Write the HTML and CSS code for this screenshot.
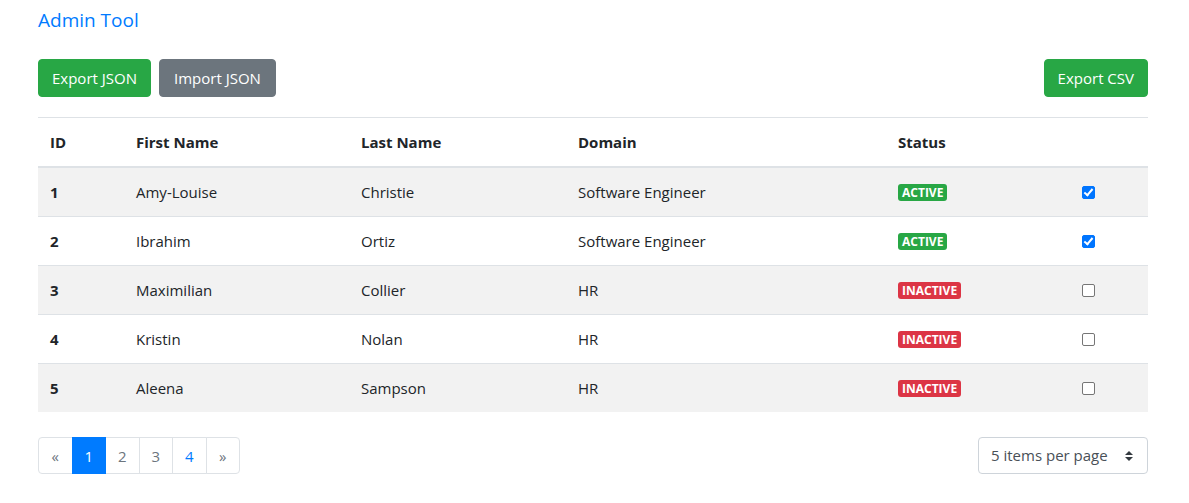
FILE: index.html
```html
<!DOCTYPE html>
<html>
<head>
<meta charset="utf-8">
<link rel="stylesheet" href="styles.css">
</head>
<body>
<div class="container">
  <a class="brand" href="#">Admin Tool</a>
  <div class="toolbar">
    <div class="group">
      <button class="btn btn-success">Export JSON</button>
      <button class="btn btn-secondary">Import JSON</button>
    </div>
    <button class="btn btn-success">Export CSV</button>
  </div>
  <table class="table">
    <thead>
      <tr>
        <th class="c-id">ID</th>
        <th class="c-first">First Name</th>
        <th class="c-last">Last Name</th>
        <th class="c-domain">Domain</th>
        <th class="c-status">Status</th>
        <th class="c-check"></th>
      </tr>
    </thead>
    <tbody>
      <tr><th>1</th><td>Amy-Louise</td><td>Christie</td><td>Software Engineer</td><td><span class="badge badge-success">Active</span></td><td class="c-check"><span class="cb checked"></span></td></tr>
      <tr><th>2</th><td>Ibrahim</td><td>Ortiz</td><td>Software Engineer</td><td><span class="badge badge-success">Active</span></td><td class="c-check"><span class="cb checked"></span></td></tr>
      <tr><th>3</th><td>Maximilian</td><td>Collier</td><td>HR</td><td><span class="badge badge-danger">Inactive</span></td><td class="c-check"><span class="cb"></span></td></tr>
      <tr><th>4</th><td>Kristin</td><td>Nolan</td><td>HR</td><td><span class="badge badge-danger">Inactive</span></td><td class="c-check"><span class="cb"></span></td></tr>
      <tr><th>5</th><td>Aleena</td><td>Sampson</td><td>HR</td><td><span class="badge badge-danger">Inactive</span></td><td class="c-check"><span class="cb"></span></td></tr>
    </tbody>
  </table>
  <div class="footer">
    <ul class="pagination">
      <li class="page-item disabled"><span class="page-link">«</span></li>
      <li class="page-item active"><span class="page-link">1</span></li>
      <li class="page-item"><span class="page-link muted">2</span></li>
      <li class="page-item"><span class="page-link muted">3</span></li>
      <li class="page-item"><span class="page-link">4</span></li>
      <li class="page-item disabled"><span class="page-link">»</span></li>
    </ul>
    <div class="select">
      <span>5 items per page</span>
      <svg class="arrows" width="8" height="10" viewBox="0 0 8 10"><path d="M4 0 L8 4 H0 Z M4 10 L8 6 H0 Z" fill="#343a40"/></svg>
    </div>
  </div>
</div>
</body>
</html>
```

FILE: styles.css
```css
* { box-sizing: border-box; }
html, body { margin: 0; padding: 0; background: #fff; }
body {
  font-family: "Open Sans", "Noto Sans", sans-serif;
  font-size: 15px;
  color: #212529;
  line-height: 1.5;
}
.container {
  width: 1110px;
  margin-left: 38px;
}
.brand {
  display: block;
  color: #007bff;
  text-decoration: none;
  font-size: 19px;
  line-height: 24px;
  padding-top: 8px;
  height: 59px;
}
.toolbar {
  display: flex;
  justify-content: space-between;
  align-items: center;
  margin-bottom: 20px;
}
.group { display: flex; gap: 8px; }
.btn {
  font-family: inherit;
  font-size: 15px;
  line-height: 24px;
  padding: 6px 13px;
  border: 1px solid transparent;
  border-radius: 4px;
  color: #fff;
  height: 38px;
  cursor: pointer;
}
.btn-success { background: #28a745; border-color: #28a745; }
.btn-secondary { background: #6c757d; border-color: #6c757d; padding: 6px 14px; }
.table {
  width: 100%;
  border-collapse: collapse;
  table-layout: fixed;
}
.table th, .table td {
  padding: 12px;
  text-align: left;
  vertical-align: top;
  border-top: 1px solid #dee2e6;
  line-height: 24px;
  font-size: 15px;
}
.table thead th {
  border-bottom: 2px solid #dee2e6;
  font-weight: 700;
}
.table tbody th { font-weight: 700; }
.table tbody tr:nth-child(odd) { background: #f2f2f2; }
.c-id { width: 86px; }
.c-first { width: 225px; }
.c-last { width: 217px; }
.c-domain { width: 320px; }
.c-status { width: 184px; }
.table .c-check { padding-left: 12px; }
.badge {
  display: inline-block;
  font-size: 12px;
  font-weight: 700;
  line-height: 1;
  padding: 3px 4px 2px;
  border-radius: 3px;
  color: #fff;
  text-transform: uppercase;
  vertical-align: 1px;
}
.badge-success { background: #28a745; }
.badge-danger { background: #dc3545; }
.cb {
  display: inline-block;
  width: 13px;
  height: 13px;
  border: 1px solid #767676;
  border-radius: 2px;
  background: #fff;
  vertical-align: -1px;
  position: relative;
}
.cb.checked {
  background: #0075ff;
  border-color: #0075ff;
}
.cb.checked::after {
  content: "";
  position: absolute;
  left: 3px;
  top: 0px;
  width: 3px;
  height: 7px;
  border: solid #fff;
  border-width: 0 2px 2px 0;
  transform: rotate(40deg);
}
.footer {
  display: flex;
  justify-content: space-between;
  align-items: flex-start;
  margin-top: 25px;
}
.pagination {
  display: flex;
  list-style: none;
  margin: 0;
  padding: 0;
}
.page-link {
  display: block;
  padding: 6px 0;
  line-height: 24px;
  height: 37px;
  border: 1px solid #dee2e6;
  margin-left: -1px;
  color: #007bff;
  background: #fff;
  font-size: 15px;
  text-align: center;
  width: 34.5px;
}
.page-item:first-child .page-link { margin-left: 0; border-radius: 4px 0 0 4px; }
.page-item:last-child .page-link { border-radius: 0 4px 4px 0; }
.page-item.disabled .page-link { color: #6c757d; }
.page-link.muted { color: #6c757d; }
.page-item.active .page-link {
  background: #007bff;
  border-color: #007bff;
  color: #fff;
  position: relative;
}
.select {
  width: 170px;
  height: 37px;
  border: 1px solid #ced4da;
  border-radius: 4px;
  display: flex;
  align-items: center;
  justify-content: space-between;
  padding: 0 14px 0 12px;
  font-size: 15px;
  color: #495057;
}
```
